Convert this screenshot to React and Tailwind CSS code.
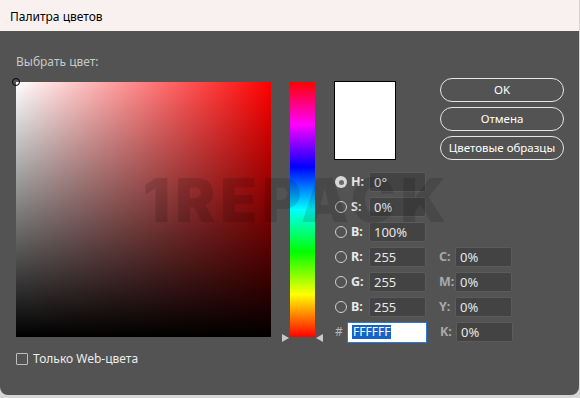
import React from "react";

const F = { fontFamily: '"Noto Sans", "Open Sans", sans-serif' };

function Radio({ on }) {
  return on ? (
    <div className="w-[12px] h-[12px] rounded-full bg-[#d8d8d8] flex items-center justify-center">
      <div className="w-[5px] h-[5px] rounded-full bg-[#6a6a6a]" />
    </div>
  ) : (
    <div className="w-[12px] h-[12px] rounded-full border-[1.5px] border-[#cfcfcf]" />
  );
}

function Field({ value }) {
  return (
    <div className="w-[57px] h-[20px] bg-[#434343] border border-[#5b5b5b] rounded-[2px] flex items-center pl-[4px] text-[13px] text-[#e6e6e6] leading-none">
      {value}
    </div>
  );
}

const left = [
  ["H:", "0°", true],
  ["S:", "0%"],
  ["B:", "100%"],
  ["R:", "255"],
  ["G:", "255"],
  ["B:", "255"],
];
const cmyk = [null, null, null, ["C:", "0%"], ["M:", "0%"], ["Y:", "0%"], ["K:", "0%"]];

export default function App() {
  return (
    <div className="w-[580px] h-[398px] bg-[#d6d6d6] relative overflow-hidden" style={F}>
      <div className="w-[579px] h-[395px] bg-[#535353] rounded-b-[8px] flex flex-col overflow-hidden">
        <div className="h-[31px] bg-[#f9f1f0] flex items-center pl-[10px] pt-[2px] text-[12px] text-black">
          Палитра цветов
        </div>
        <div className="flex-1 flex pl-[16px]">
          {/* left column */}
          <div className="flex flex-col">
            <div className="mt-[23px] h-[16px] leading-[16px] text-[12px] text-[#c8c8c8]">Выбрать цвет:</div>
            <div className="relative mt-[12px] w-[255px] h-[255px] bg-[linear-gradient(to_top,#000,rgba(0,0,0,0)),linear-gradient(to_right,#fff,#f00)]">
              <div className="absolute -left-[4px] -top-[4px] w-[8px] h-[8px] rounded-full border-[1.5px] border-black" />
            </div>
            <div className="mt-[14px] flex items-center gap-[5px]">
              <div className="w-[12px] h-[12px] border border-[#bdbdbd] rounded-[1px]" />
              <span className="text-[12px] leading-[16px] text-[#ececec]">Только Web-цвета</span>
            </div>
          </div>
          {/* hue column */}
          <div className="ml-[19px] mt-[51px] w-[25px] flex flex-col">
            <div className="w-[25px] h-[255px] bg-[linear-gradient(to_bottom,#f00,#f0f,#00f,#0ff,#0f0,#ff0,#f00)]" />
            <div className="-mx-[8px] flex justify-between -mt-[3px]">
              <div className="w-0 h-0 border-y-[4px] border-y-transparent border-l-[7px] border-l-[#c8c8c8]" />
              <div className="w-0 h-0 border-y-[4px] border-y-transparent border-r-[7px] border-r-[#c8c8c8]" />
            </div>
          </div>
          {/* right section */}
          <div className="ml-[19px] flex flex-col">
            <div className="flex">
              <div className="mt-[50px] w-[62px] h-[79px] bg-white border border-black" />
              <div className="ml-[44px] mt-[47px] flex flex-col gap-[5px]">
                {["OK", "Отмена", "Цветовые образцы"].map((t) => (
                  <div
                    key={t}
                    className="w-[124px] h-[24px] rounded-[12px] border-[1.5px] border-[#e6e6e6] flex items-center justify-center text-[11.5px] text-white"
                  >
                    {t}
                  </div>
                ))}
              </div>
            </div>
            <div className="mt-[12px] flex flex-col gap-[5px]">
              {[...left, ["#", "hex"]].map((row, i) => (
                <div key={i} className="h-[20px] flex items-center">
                  {row[0] === "#" ? (
                    <>
                      <span className="w-[13px] text-[12px] text-[#b8b8b8] pl-[1px]">#</span>
                      <div className="w-[80px] h-[21px] bg-white border border-[#2c7ad6] flex items-center pl-[4px]">
                        <span className="bg-[#1463c8] text-white text-[12px] leading-[14px] px-[1px]">FFFFFF</span>
                      </div>
                    </>
                  ) : (
                    <>
                      <div className="ml-[1px]"><Radio on={row[2]} /></div>
                      <span className="w-[22px] pl-[4px] text-[12.5px] font-bold text-[#e8e8e8]">{row[0]}</span>
                      <Field value={row[1]} />
                    </>
                  )}
                  {cmyk[i] && (
                    <>
                      <span className="ml-[13px] w-[16px] text-[12.5px] font-bold text-[#a9a9a9]">{cmyk[i][0]}</span>
                      <Field value={cmyk[i][1]} />
                    </>
                  )}
                </div>
              ))}
            </div>
          </div>
        </div>
      </div>
      <div
        className="absolute left-[143px] top-[170px] text-[60px] font-black text-black/[0.13] leading-none tracking-[5px] pointer-events-none"
        style={{ fontFamily: '"Inter", "Liberation Sans", sans-serif' }}
      >
        1REPACK
      </div>
    </div>
  );
}
